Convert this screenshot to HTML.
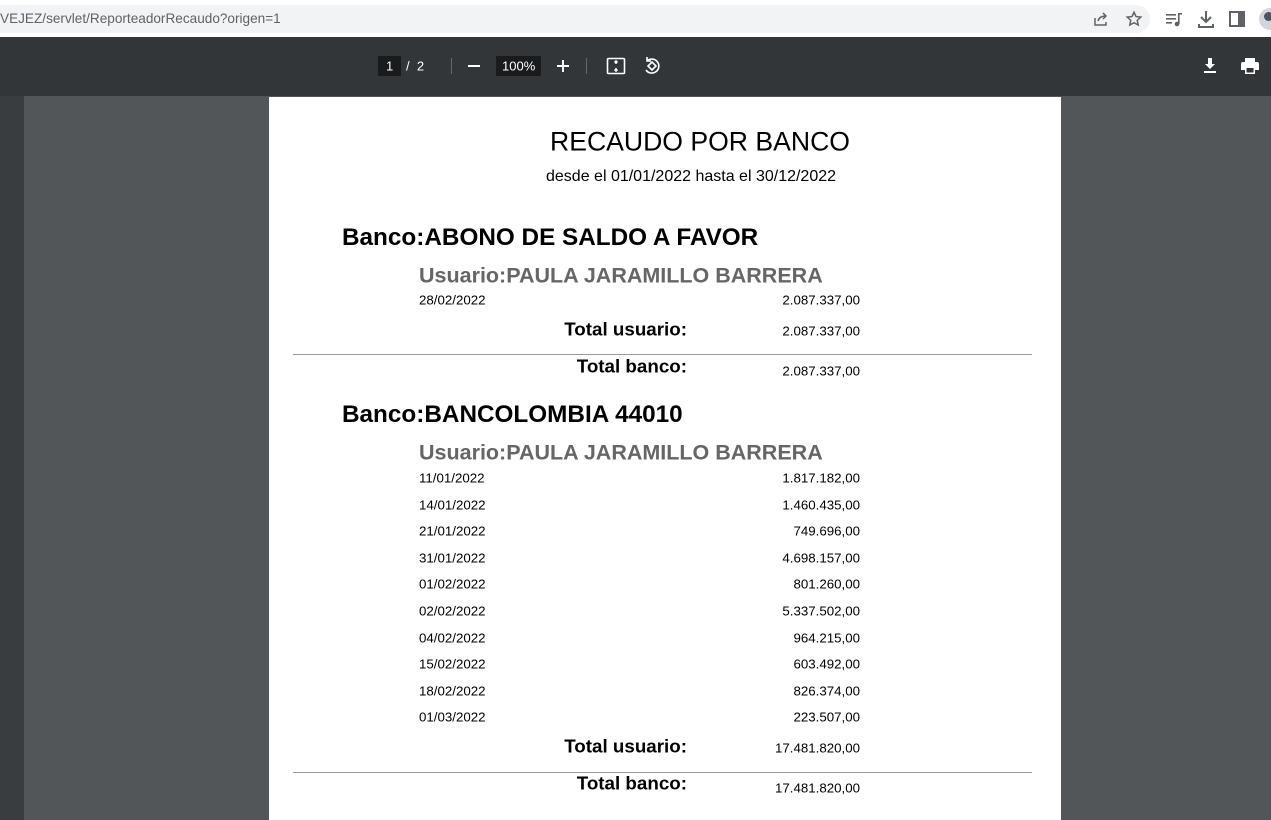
<!DOCTYPE html>
<html><head><meta charset="utf-8"><style>
*{margin:0;padding:0;box-sizing:border-box}
body{width:1271px;height:820px;overflow:hidden;background:#525659;font-family:"Liberation Sans",Arial,sans-serif;position:relative}
.a{position:absolute;white-space:nowrap;transform:translateY(-50%);line-height:1}
.r{text-align:right}
.d{font-size:13.3px;color:#000}
.t{font-size:18.8px;font-weight:bold}
.b{font-size:24.3px;font-weight:bold}
.u{font-size:21.5px;font-weight:bold;color:#666}
.ln{position:absolute;left:293px;width:739px;height:1px;background:#999}
</style></head><body>
<div style="position:absolute;left:0;top:0;width:1271px;height:37px;background:#fff"></div>
<div style="position:absolute;left:-20px;top:5px;width:1170px;height:28px;background:#f1f3f4;border-radius:14px"></div>
<div class="a" style="left:0;top:19px;font-size:13.6px;color:#5f6368">VEJEZ/servlet/ReporteadorRecaudo?origen=1</div>
<svg style="position:absolute;left:1092px;top:10px" width="18" height="18" viewBox="0 0 18 18" fill="none" stroke="#5f6368" stroke-width="1.5"><path d="M3 8v7h11v-3M6 11c1-4 4-5 8-5M11 3l3 3-3 3"/></svg>
<svg style="position:absolute;left:1125px;top:10px" width="18" height="18" viewBox="0 0 24 24" fill="none" stroke="#5f6368" stroke-width="2"><path d="M12 3l2.7 5.8 6.3.7-4.7 4.3 1.3 6.2L12 17l-5.6 3 1.3-6.2L3 9.5l6.3-.7z"/></svg>
<svg style="position:absolute;left:1164px;top:10px" width="20" height="18" viewBox="0 0 20 18" fill="#5f6368"><rect x="2" y="4" width="10" height="1.6"/><rect x="2" y="8" width="10" height="1.6"/><rect x="2" y="12" width="6" height="1.6"/><rect x="14" y="3" width="1.6" height="11"/><circle cx="13" cy="14" r="2.3"/><rect x="14" y="3" width="4" height="1.6"/></svg>
<svg style="position:absolute;left:1197px;top:9px" width="18" height="20" viewBox="0 0 18 20" fill="none" stroke="#5f6368" stroke-width="2"><path d="M9 2v11M4 8l5 5 5-5M2 15v3h14v-3"/></svg>
<svg style="position:absolute;left:1229px;top:11px" width="16" height="16" viewBox="0 0 16 16"><rect x="1" y="1" width="14" height="14" fill="none" stroke="#5f6368" stroke-width="2"/><rect x="9" y="1" width="6" height="14" fill="#5f6368"/></svg>
<div style="position:absolute;left:1259px;top:8px;width:22px;height:22px;border-radius:50%;background:#d2d6dc"></div>
<div style="position:absolute;left:1264px;top:12px;width:9px;height:9px;border-radius:50%;background:#4a5568"></div>
<div style="position:absolute;left:0;top:37px;width:1271px;height:59px;background:#323639"></div>
<div style="position:absolute;left:378px;top:56px;width:23px;height:20px;background:#191b1c"></div>
<div class="a" style="left:386px;top:66px;font-size:13px;color:#fff">1</div>
<div class="a" style="left:406px;top:66px;font-size:13px;color:#fff">/&nbsp;&nbsp;2</div>
<div style="position:absolute;left:451px;top:58px;width:1px;height:16px;background:#666"></div>
<div style="position:absolute;left:468px;top:65px;width:12px;height:2px;background:#fff"></div>
<div style="position:absolute;left:496px;top:56px;width:45px;height:20px;background:#191b1c"></div>
<div class="a" style="left:502px;top:66px;font-size:13px;color:#fff">100%</div>
<div style="position:absolute;left:557px;top:65px;width:12px;height:2px;background:#fff"></div>
<div style="position:absolute;left:562px;top:60px;width:2px;height:12px;background:#fff"></div>
<div style="position:absolute;left:586px;top:58px;width:1px;height:16px;background:#666"></div>
<svg style="position:absolute;left:606px;top:57px" width="20" height="18" viewBox="0 0 20 18" fill="none" stroke="#fff" stroke-width="1.6"><rect x="1.5" y="1.5" width="17" height="15" rx="1"/><path d="M10 4v3M8.5 5.5L10 4l1.5 1.5M10 14v-3M8.5 12.5L10 14l1.5-1.5" /></svg>
<svg style="position:absolute;left:642px;top:56px" width="20" height="20" viewBox="0 0 20 20" fill="none" stroke="#fff" stroke-width="1.6"><path d="M10 6l4 4-4 4-4-4z"/><path d="M5 5a7 7 0 1 1-1 9M5 1v4h4"/></svg>
<svg style="position:absolute;left:1202px;top:57px" width="16" height="18" viewBox="0 0 16 18" fill="#fff"><path d="M6 1h4v6h3l-5 5-5-5h3z"/><rect x="2" y="14" width="12" height="2"/></svg>
<svg style="position:absolute;left:1240px;top:57px" width="20" height="18" viewBox="0 0 20 18" fill="#fff"><rect x="5" y="1" width="10" height="4"/><path d="M1 7a2 2 0 0 1 2-2h14a2 2 0 0 1 2 2v6h-4v4H5v-4H1z"/><rect x="6.5" y="11" width="7" height="4.5" fill="#323639"/></svg>
<div style="position:absolute;left:0;top:96px;width:24px;height:724px;background:#3a3d40"></div>
<div style="position:absolute;left:269px;top:97px;width:792px;height:723px;background:#fff"></div>
<div class="a" style="left:550px;top:142px;font-size:26.6px">RECAUDO POR BANCO</div>
<div class="a" style="left:546px;top:177px;font-size:16px">desde el 01/01/2022 hasta el 30/12/2022</div>
<div class="a b" style="left:342px;top:238px">Banco:ABONO DE SALDO A FAVOR</div>
<div class="a u" style="left:419px;top:276px">Usuario:PAULA JARAMILLO BARRERA</div>
<div class="a d" style="left:419px;top:300px">28/02/2022</div><div class="a d r" style="right:411px;top:300px">2.087.337,00</div>
<div class="a t r" style="right:584px;top:330px">Total usuario:</div><div class="a d r" style="right:411px;top:331px">2.087.337,00</div>
<div class="ln" style="top:354px"></div>
<div class="a t r" style="right:584px;top:367px">Total banco:</div><div class="a d r" style="right:411px;top:371px">2.087.337,00</div>
<div class="a b" style="left:342px;top:415px">Banco:BANCOLOMBIA 44010</div>
<div class="a u" style="left:419px;top:453px">Usuario:PAULA JARAMILLO BARRERA</div>
<div class="a d" style="left:419px;top:478px">11/01/2022</div><div class="a d r" style="right:411px;top:478px">1.817.182,00</div>
<div class="a d" style="left:419px;top:505px">14/01/2022</div><div class="a d r" style="right:411px;top:505px">1.460.435,00</div>
<div class="a d" style="left:419px;top:531px">21/01/2022</div><div class="a d r" style="right:411px;top:531px">749.696,00</div>
<div class="a d" style="left:419px;top:558px">31/01/2022</div><div class="a d r" style="right:411px;top:558px">4.698.157,00</div>
<div class="a d" style="left:419px;top:584px">01/02/2022</div><div class="a d r" style="right:411px;top:584px">801.260,00</div>
<div class="a d" style="left:419px;top:611px">02/02/2022</div><div class="a d r" style="right:411px;top:611px">5.337.502,00</div>
<div class="a d" style="left:419px;top:638px">04/02/2022</div><div class="a d r" style="right:411px;top:638px">964.215,00</div>
<div class="a d" style="left:419px;top:664px">15/02/2022</div><div class="a d r" style="right:411px;top:664px">603.492,00</div>
<div class="a d" style="left:419px;top:691px">18/02/2022</div><div class="a d r" style="right:411px;top:691px">826.374,00</div>
<div class="a d" style="left:419px;top:717px">01/03/2022</div><div class="a d r" style="right:411px;top:717px">223.507,00</div>
<div class="a t r" style="right:584px;top:747px">Total usuario:</div><div class="a d r" style="right:411px;top:748px">17.481.820,00</div>
<div class="ln" style="top:772px"></div>
<div class="a t r" style="right:584px;top:784px">Total banco:</div><div class="a d r" style="right:411px;top:788px">17.481.820,00</div>
</body></html>
